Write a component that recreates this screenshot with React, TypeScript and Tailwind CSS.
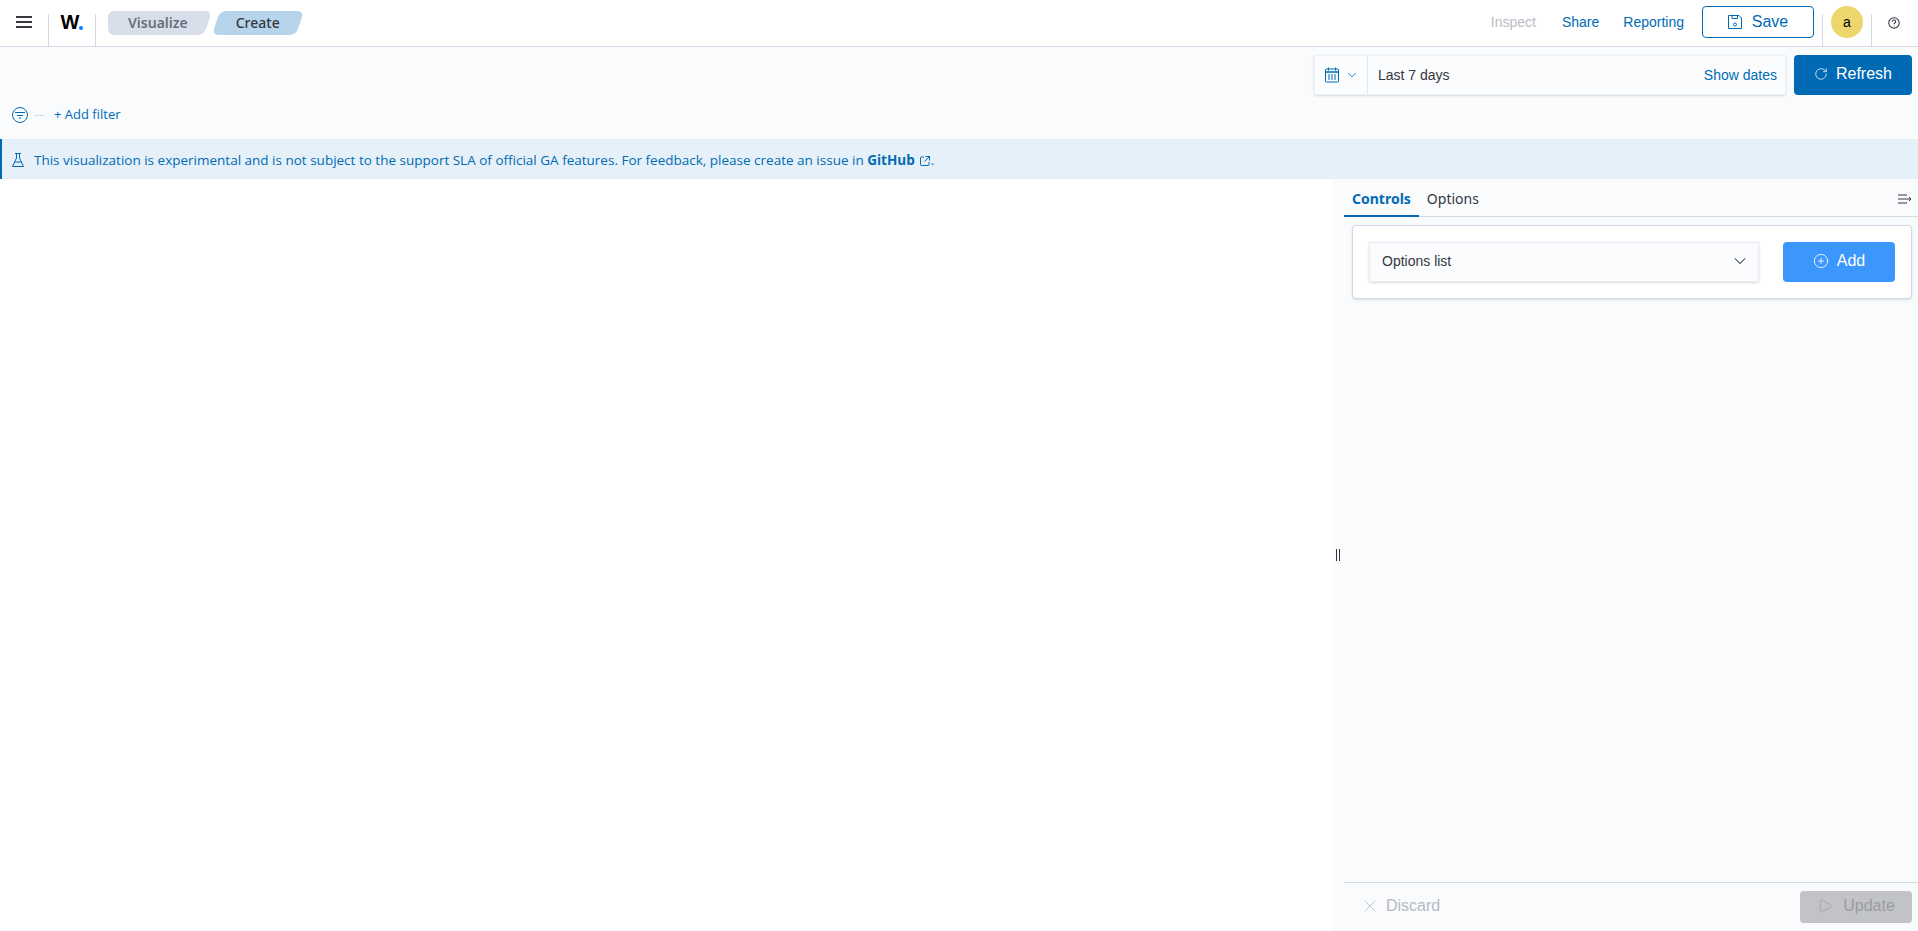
import { ChevronDown, CirclePlus, Play, RotateCw, X } from 'lucide-react';

const sans = 'font-["Noto_Sans",sans-serif]';
const openSans = 'font-["Open_Sans",sans-serif]';
const arial = 'font-["Liberation_Sans",sans-serif]';

function MenuIcon() {
  return (
    <svg viewBox="0 0 16 12" className="w-4 h-3 text-[#343741]" fill="none" stroke="currentColor" strokeWidth="2">
      <path d="M0 1h16M0 6h16M0 11h16" />
    </svg>
  );
}

function SaveIcon() {
  return (
    <svg viewBox="0 0 14 14" className="w-3.5 h-3.5 text-[#006bb4]" fill="none" stroke="currentColor" strokeWidth="1">
      <path d="M.5.5h10.500l2.500 2.500v10.500H.5z" />
      <path d="M4 .5v3h5.500v-3" />
      <circle cx="7" cy="9.500" r="1.500" />
    </svg>
  );
}

function CalendarIcon() {
  return (
    <svg viewBox="0 0 14 15" className="w-3.5 h-4 text-[#006bb4]" fill="none" stroke="currentColor" strokeWidth="1">
      <rect x=".5" y="1.500" width="13" height="13" rx="1" />
      <path strokeWidth="1.500" d="M.5 4.500h13" />
      <path d="M3.500 0v3M10.500 0v3" />
      <path strokeDasharray="2 1" d="M3 7.500h8M3 9.500h8M3 11.500h8" />
    </svg>
  );
}

function FilterIcon() {
  return (
    <svg viewBox="0 0 16 16" className="w-4 h-4 text-[#006bb4]" fill="none" stroke="currentColor" strokeWidth="1">
      <circle cx="8" cy="8" r="7.500" />
      <path d="M3 5.500h10M5 8.500h6M7 11h2" />
    </svg>
  );
}

function FlaskIcon() {
  return (
    <svg viewBox="0 0 12 14" className="w-3 h-3.5 text-[#006bb4]" fill="none" stroke="currentColor" strokeWidth="1">
      <path d="M3 .5h6M4.500.5v4.500L.5 13.500h11L7.500 5V.5" />
      <path d="M2.800 9h6.400" />
    </svg>
  );
}

function CollapseIcon() {
  return (
    <svg viewBox="0 0 14 9" className="w-3.5 h-2.5 text-[#343741]" fill="none" stroke="currentColor" strokeWidth="1">
      <path d="M0 .5h9M0 4.500h13M0 8.500h9M11 2.500l2 2-2 2" />
    </svg>
  );
}

function ExternalIcon() {
  return (
    <svg viewBox="0 0 12 12" className="w-3 h-3 inline-block ml-1 text-[#006bb4]" fill="none" stroke="currentColor" strokeWidth="1">
      <path d="M5 2H2.500a1 1 0 0 0-1 1v6.500a1 1 0 0 0 1 1H9a1 1 0 0 0 1-1V7M6.500 1.500h4v4M10.500 1.500 5.500 6.500" />
    </svg>
  );
}

function HelpIcon() {
  return (
    <svg viewBox="0 0 16 16" className="w-3 h-3 text-[#343741]" fill="none" stroke="currentColor" strokeWidth="1.400">
      <circle cx="8" cy="8" r="7" />
      <path d="M5.800 6.200a2.200 2.200 0 1 1 3.300 1.900c-.7.400-1.100.9-1.100 1.700" />
      <path d="M8 11.500v1" />
    </svg>
  );
}

function Breadcrumbs() {
  return (
    <div className={`flex items-center ml-3 text-sm ${sans}`}>
      <div className="relative h-6 pl-5 pr-6 flex items-center font-semibold text-[#69707d]">
        <div className="absolute inset-y-0 left-0 w-16 bg-[#d9deeb] rounded-l-md" />
        <div className="absolute inset-y-0 right-1 w-16 bg-[#d9deeb] rounded-r-md -skew-x-[18deg]" />
        <span className="relative">Visualize</span>
      </div>
      <div className="relative h-6 px-6 flex items-center font-medium text-[#343741]">
        <div className="absolute inset-y-0 inset-x-1 bg-[#b7d5ea] rounded-md -skew-x-[18deg]" />
        <span className="relative">Create</span>
      </div>
    </div>
  );
}

function TopBar() {
  return (
    <header className="h-[47px] shrink-0 flex items-stretch bg-white border-b border-[#d3dae6]">
      <div className="w-12 flex items-center justify-center pb-0.5">
        <MenuIcon />
      </div>
      <div className="mt-3.5 w-12 border-x border-[#d3dae6] -mb-px flex justify-center">
        <div className={`-mt-0.5 h-5 flex items-end font-bold text-xl leading-none text-black ${arial}`}>
          W
          <span className="w-1 h-1 mb-0.5 rounded-full bg-[#0a7cff]" />
        </div>
      </div>
      <Breadcrumbs />
      <div className="flex-1" />
      <div className={`flex items-center gap-6 pb-0.5 text-sm text-[#006bb4] ${arial}`}>
        <span className="mr-0.5 text-[#b8bcc4]">Inspect</span>
        <span>Share</span>
        <span>Reporting</span>
        <button className="w-28 h-8 flex items-center justify-center gap-2.5 bg-white border border-[#006bb4] rounded text-base -ml-1.5">
          <SaveIcon />
          Save
        </button>
      </div>
      <div className="ml-2 mt-3.5 -mb-px px-2 border-x border-[#d3dae6]">
        <div className={`-mt-2 w-8 h-8 rounded-full bg-[#edd66c] flex items-center justify-center text-sm text-black ${arial}`}>
          a
        </div>
      </div>
      <div className="pl-4 pr-4.5 flex items-center">
        <HelpIcon />
      </div>
    </header>
  );
}

function QueryBar() {
  return (
    <div className={`bg-[#fafbfd] shrink-0 ${arial}`}>
      <div className="flex justify-end gap-2 pt-2 pr-1.5">
        <div className="w-118 h-10 flex items-center bg-[#fbfcfd] border border-[#edf0f5] shadow text-sm">
          <div className="h-full pl-2.5 pr-2 flex items-center gap-1.5 border-r border-[#e3e7ef]">
            <CalendarIcon />
            <ChevronDown className="w-3.5 h-3.5 text-[#006bb4]" strokeWidth={1.5} />
          </div>
          <span className="flex-1 pl-2.5 text-[#343741]">Last 7 days</span>
          <span className="pr-2 text-[#006bb4]">Show dates</span>
        </div>
        <button className="h-10 px-5 pb-0.5 flex items-center justify-center gap-2 bg-[#006bb4] rounded text-base text-white">
          <RotateCw className="w-3.5 h-3.5 text-white" strokeWidth={1.25} />
          Refresh
        </button>
      </div>
      <div className={`h-11 flex items-center gap-1.5 pl-3 pb-1 text-[13px] text-[#006bb4] ${openSans}`}>
        <FilterIcon />
        <div className="w-2.5 h-px bg-[#d3dae6]" />
        <span className="ml-1">+ Add filter</span>
      </div>
    </div>
  );
}

function Banner() {
  return (
    <div className={`h-10 shrink-0 flex items-center gap-2.5 pl-2.5 pt-0.5 bg-[#e6f0f8] border-l-2 border-[#006bb4] text-[13.5px] text-[#006bb4] ${openSans}`}>
      <FlaskIcon />
      <p>
        This visualization is experimental and is not subject to the support SLA of official GA features. For feedback, please create an issue in{' '}
        <span className="font-bold">GitHub</span>
        <ExternalIcon />.
      </p>
    </div>
  );
}

function SidePanel() {
  return (
    <aside className="relative w-[586px] shrink-0 flex flex-col pl-3 bg-[#fafbfd]">
      <div className="absolute left-1 top-1/2 -translate-y-1/2 flex gap-0.5">
        <div className="w-px h-3 bg-[#343741]" />
        <div className="w-px h-3 bg-[#343741]" />
      </div>
      <div className={`flex items-center border-b border-[#d3dae6] text-sm ${sans}`}>
        <div className="px-2 pt-2.5 pb-1.5 font-bold text-[#006bb4] border-b-2 border-[#006bb4] -mb-px">Controls</div>
        <div className="px-2 pt-0.5 text-[#343741]">Options</div>
        <div className="flex-1" />
        <div className="pr-1.5 pt-0.5">
          <CollapseIcon />
        </div>
      </div>
      <div className="mt-2 ml-2 mr-1.5 flex items-center gap-6 p-4 bg-white border border-[#d3dae6] rounded shadow">
        <div className={`flex-1 h-10 flex items-center justify-between pl-3 pr-3 pb-0.5 bg-[#fbfcfd] border border-[#e6eaf1] shadow text-sm text-[#343741] ${arial}`}>
          Options list
          <ChevronDown className="w-5 h-5 -mr-1" strokeWidth={1.25} />
        </div>
        <button className={`w-28 h-10 pb-0.5 flex items-center justify-center gap-2 bg-[#3b97fb] rounded text-base text-white ${arial}`}>
          <CirclePlus className="w-4 h-4" strokeWidth={1.25} />
          Add
        </button>
      </div>
      <div className="flex-1" />
      <div className={`py-2 flex items-center justify-between pl-4 pr-1.5 border-t border-[#d3dae6] ${arial}`}>
        <div className="flex items-center gap-1.5 pb-0.5 text-base text-[#b4bac5]">
          <X className="w-5 h-5" strokeWidth={1} />
          Discard
        </div>
        <button className="w-28 h-8 pb-0.5 flex items-center justify-center gap-2.5 bg-[#c2c3c6] rounded text-base text-[#9a9ca1]">
          <Play className="w-4 h-4" strokeWidth={1} />
          Update
        </button>
      </div>
    </aside>
  );
}

export default function App() {
  return (
    <div className="h-screen flex flex-col overflow-hidden bg-white">
      <TopBar />
      <QueryBar />
      <Banner />
      <div className="flex-1 flex justify-end">
        <SidePanel />
      </div>
    </div>
  );
}
